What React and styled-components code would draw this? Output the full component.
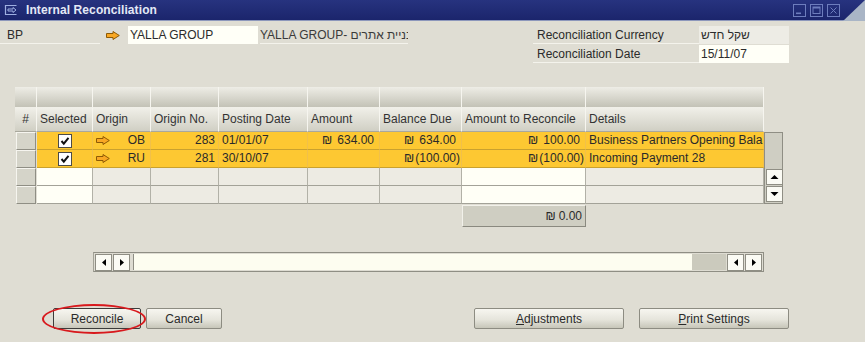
import React from 'react'
import styled, { createGlobalStyle } from 'styled-components'

const GlobalStyle = createGlobalStyle`
  html, body { margin:0; padding:0; }
  body {
    background:#dfddd3;
    font-family:"Liberation Sans", Arial, sans-serif;
    font-size:12px;
    color:#2b2b2b;
  }
`

const columns = [
  { key: 'num', label: '#', align: 'center' },
  { key: 'sel', label: 'Selected', editable: true },
  { key: 'origin', label: 'Origin' },
  { key: 'originNo', label: 'Origin No.' },
  { key: 'date', label: 'Posting Date' },
  { key: 'amount', label: 'Amount' },
  { key: 'balance', label: 'Balance Due' },
  { key: 'toRec', label: 'Amount to Reconcile', editable: true },
  { key: 'details', label: 'Details' },
]

const rows = [
  { origin: 'OB', no: '283', date: '01/01/07', amount: 634, balance: 634, toRec: 100, details: 'Business Partners Opening Balance' },
  { origin: 'RU', no: '281', date: '30/10/07', amount: null, balance: -100, toRec: -100, details: 'Incoming Payment 28' },
]

const Window = styled.div`
  width:865px;
  height:342px;
  display:flex;
  flex-direction:column;
  background:#dfddd3;
  overflow:hidden;
`

const TitleBar = styled.div`
  position:relative;
  flex:none;
  height:20px;
  display:flex;
  align-items:center;
  gap:8px;
  padding-left:4px;
  background:linear-gradient(#27337f, #1b256c);
  border-bottom:1px solid #8d97bb;
  color:#e4e9f6;
  font-weight:bold;
  font-size:12px;

  &::after{
    content:'';
    position:absolute;
    right:0;
    top:0;
    width:22px;
    height:21px;
    background:#a9b5c6;
    clip-path:polygon(100% 0, 100% 100%, 0 100%);
  }
`

const TitleText = styled.span`
  flex:1;
  letter-spacing:0.1px;
`

const WinButtons = styled.div`
  display:flex;
  gap:4px;
  margin-right:25px;
`

const TopSection = styled.div`
  display:flex;
  justify-content:space-between;
  padding:5px 76px 0 0;
`

const BpRow = styled.div`
  display:flex;
  align-items:center;
  height:18px;
`

const Label = styled.div`
  box-sizing:border-box;
  width:${p => p.$w}px;
  height:18px;
  line-height:18px;
  padding-left:${p => p.$pad ?? 7}px;
  border-bottom:1px solid #f4f3ec;
  white-space:nowrap;
`

const ArrowSlot = styled.div`
  width:28px;
  height:18px;
  display:flex;
  align-items:center;
  padding-left:6px;
  box-sizing:border-box;
`

const Field = styled.div`
  box-sizing:border-box;
  width:${p => p.$w}px;
  height:18px;
  line-height:18px;
  padding-left:2px;
  background:${p => (p.$readonly ? '#edece5' : '#fffff7')};
  white-space:nowrap;
`

const Desc = styled.div`
  box-sizing:border-box;
  width:148px;
  margin-left:2px;
  height:18px;
  line-height:18px;
  overflow:hidden;
  white-space:nowrap;
  border-bottom:1px solid #f4f3ec;
  color:#3a3a3a;
`

const RightBlock = styled.div`
  display:flex;
  flex-direction:column;
  gap:1px;
`

const RightRow = styled.div`
  display:flex;
`

const Grid = styled.div`
  display:grid;
  grid-template-columns:22px 56px 58px 68px 89px 72px 82px 124px 178px 19px;
  margin:24px 0 0 15px;
  width:max-content;
`

const HeadCell = styled.div`
  box-sizing:border-box;
  height:${p => (p.$top ? 21 : 24)}px;
  line-height:${p => (p.$top ? 21 : 23)}px;
  padding:0 3px;
  text-align:${p => p.$align || 'left'};
  background:${p => (p.$top ? 'linear-gradient(#eeede6, #c3c2b6)' : 'linear-gradient(#f0efe8, #d0cfc4)')};
  border-right:1px solid #f6f5ef;
  border-bottom:1px solid ${p => (p.$top ? '#f0efe8' : '#a9a89d')};
  white-space:nowrap;
  overflow:hidden;
  color:#333;
`

const HeadBlank = styled.div``

const RowHead = styled.div`
  box-sizing:border-box;
  height:18px;
  margin:0 1px 0 1px;
  background:#d5d4c9;
  border-top:1px solid #f6f5ef;
  border-left:1px solid #f6f5ef;
  border-right:1px solid #8f8e84;
  border-bottom:1px solid #8f8e84;
`

const Cell = styled.div`
  box-sizing:border-box;
  height:18px;
  line-height:17px;
  padding:0 ${p => p.$padR ?? 3}px 0 3px;
  display:flex;
  align-items:center;
  justify-content:${p => (p.$align === 'right' ? 'flex-end' : p.$align === 'center' ? 'center' : 'space-between')};
  background:${p => (p.$active ? '#fdc832' : p.$editable ? '#fffff6' : '#edebe3')};
  border-right:1px solid ${p => (p.$active ? '#f1c04a' : '#b2b1a7')};
  border-bottom:1px solid ${p => (p.$active ? '#c9a12e' : '#a3a298')};
  white-space:nowrap;
  overflow:hidden;
  color:#2a2a2a;
`

const Ghost = styled.span`
  visibility:${p => (p.$show ? 'visible' : 'hidden')};
`

const Shekel = styled.span`
  margin-right:${p => p.$gap}px;
`

const VScroll = styled.div`
  grid-column:10;
  grid-row:3 / 7;
  box-sizing:border-box;
  display:flex;
  flex-direction:column;
  border:1px solid #8f8e84;
  background:#cfcec3;
  padding:0 1px 1px;
`

const VTrack = styled.div`
  flex:1;
`

const ScrollBtn = styled.div`
  box-sizing:border-box;
  width:${p => p.$w || 17}px;
  height:${p => p.$h || 17}px;
  display:flex;
  align-items:center;
  justify-content:center;
  background:#fbfbf4;
  border:1px solid #8f8e84;
  margin-top:${p => p.$mt || 0}px;
`

const TotalCell = styled.div`
  grid-column:8;
  grid-row:7;
  box-sizing:border-box;
  margin-top:1px;
  height:22px;
  display:flex;
  align-items:center;
  justify-content:flex-end;
  padding-right:3px;
  background:#cfcec2;
  border-right:1px solid #8a897f;
  border-bottom:1px solid #8a897f;
  border-top:1px solid #f2f1ea;
  border-left:1px solid #f2f1ea;
`

const HScroll = styled.div`
  grid-column:3 / 10;
  grid-row:8;
  margin-top:25px;
  box-sizing:border-box;
  height:20px;
  width:671px;
  display:flex;
  align-items:center;
  gap:1px;
  padding:0 1px;
  border:1px solid #8f8e84;
  border-left-color:#a3a297;
  background:#dedcd2;
`

const HTrack = styled.div`
  flex:1;
  height:16px;
  margin-left:2px;
  display:flex;
  background:#fdfdf0;
  border-left:1px solid #8f8e84;
`

const HThumb = styled.div`
  width:34px;
  margin-left:auto;
  background:#cbcabd;
`

const ButtonRow = styled.div`
  display:flex;
  justify-content:space-between;
  margin-top:36px;
  padding:0 76px 0 53px;
`

const ButtonGroup = styled.div`
  display:flex;
  gap:${p => p.$gap}px;
`

const Button = styled.button`
  position:relative;
  box-sizing:border-box;
  width:${p => p.$w}px;
  height:21px;
  padding:0;
  font-family:"Liberation Sans", Arial, sans-serif;
  font-size:12px;
  color:#2a2a2a;
  background:linear-gradient(#f7f6f0, #e6e5dc 55%, #c7c6b9);
  border:1px solid ${p => (p.$default ? '#3c3c3a' : '#8d8c82')};
  border-radius:2px;

  u{ text-decoration:underline; }
`

const Ellipse = styled.span`
  position:absolute;
  left:-12px;
  top:-5px;
  width:104px;
  height:30px;
  border:2px solid #d8191d;
  border-radius:50%;
  box-sizing:border-box;
  pointer-events:none;
`

function Arrow() {
  return (
    <svg width="14" height="9" viewBox="0 0 14 9">
      <path d="M0.5 2.5 H7 V0.5 L13.3 4.5 L7 8.5 V6.5 H0.5 Z" fill="#f9a824" stroke="#8d5a06" strokeWidth="1" />
    </svg>
  )
}

function Check() {
  return (
    <svg width="14" height="14" viewBox="0 0 14 14">
      <rect x="0.5" y="0.5" width="13" height="13" fill="#fff" stroke="#4c4c48" />
      <path d="M3.5 7 L5.8 9.6 L10.5 3.8" fill="none" stroke="#111" strokeWidth="2" />
    </svg>
  )
}

function Tri({ dir }) {
  const d = {
    left: 'M5 1 L1 4.5 L5 8 Z',
    right: 'M1 1 L5 4.5 L1 8 Z',
    up: 'M0.5 5 L4.5 1 L8.5 5 Z',
    down: 'M0.5 1 L4.5 5 L8.5 1 Z',
  }[dir]
  const horiz = dir === 'left' || dir === 'right'
  return (
    <svg width={horiz ? 6 : 9} height={horiz ? 9 : 6} viewBox={horiz ? '0 0 6 9' : '0 0 9 6'}>
      <path d={d} fill="#000" />
    </svg>
  )
}

function TitleIcon() {
  return (
    <svg width="14" height="12" viewBox="0 0 14 12">
      <path d="M12.5 1.5 H1.5 V10.5 H12.5" fill="none" stroke="#9fb0e2" strokeWidth="1.2" />
      <path d="M4 5 H9 V3.5 L12 6 L9 8.5 V7 H4 Z" fill="none" stroke="#9fb0e2" strokeWidth="1" />
    </svg>
  )
}

function WinIcon({ kind }) {
  return (
    <svg width="13" height="13" viewBox="0 0 13 13">
      <rect x="0.5" y="0.5" width="12" height="12" fill="none" stroke="#6d7dbd" />
      {kind === 'min' && <rect x="3" y="8.5" width="5" height="1.6" fill="#6d7dbd" />}
      {kind === 'max' && <rect x="3" y="3" width="7" height="6.5" fill="none" stroke="#6d7dbd" strokeWidth="1" />}
      {kind === 'max' && <rect x="3" y="3" width="7" height="1.5" fill="#6d7dbd" />}
      {kind === 'close' && <path d="M3.5 3.5 L9.5 9.5 M9.5 3.5 L3.5 9.5" stroke="#6d7dbd" strokeWidth="1" />}
    </svg>
  )
}

function Money({ value }) {
  if (value === null || value === undefined) return null
  const neg = value < 0
  const text = Math.abs(value).toFixed(2)
  return (
    <span>
      <Shekel $gap={1}>₪</Shekel>
      <Ghost $show={neg}>(</Ghost>
      {text}
      <Ghost $show={neg}>)</Ghost>
    </span>
  )
}

function DataRow({ row }) {
  const active = !!row
  return (
    <>
      <RowHead />
      <Cell $active={active} $editable $align="center">{active && <Check />}</Cell>
      <Cell $active={active} $padR={5}>
        {active && <Arrow />}
        {active && <span>{row.origin}</span>}
      </Cell>
      <Cell $active={active} $align="right">{active && row.no}</Cell>
      <Cell $active={active}>{active && row.date}</Cell>
      <Cell $active={active} $align="right" $padR={1}>{active && <Money value={row.amount} />}</Cell>
      <Cell $active={active} $align="right" $padR={1}>{active && <Money value={row.balance} />}</Cell>
      <Cell $active={active} $editable $align="right" $padR={1}>{active && <Money value={row.toRec} />}</Cell>
      <Cell $active={active} $padR={0}>{active && row.details}</Cell>
    </>
  )
}

export default function App() {
  return (
    <>
      <GlobalStyle />
      <Window>
        <TitleBar>
          <TitleIcon />
          <TitleText>Internal Reconciliation</TitleText>
          <WinButtons>
            <WinIcon kind="min" />
            <WinIcon kind="max" />
            <WinIcon kind="close" />
          </WinButtons>
        </TitleBar>

        <TopSection>
          <BpRow>
            <Label $w={100}>BP</Label>
            <ArrowSlot><Arrow /></ArrowSlot>
            <Field $w={130}>YALLA GROUP</Field>
            <Desc>YALLA GROUP- בניית אתרים</Desc>
          </BpRow>
          <RightBlock>
            <RightRow>
              <Label $w={166} $pad={4}>Reconciliation Currency</Label>
              <Field $w={90} $readonly>שקל חדש</Field>
            </RightRow>
            <RightRow>
              <Label $w={166} $pad={4}>Reconciliation Date</Label>
              <Field $w={90}>15/11/07</Field>
            </RightRow>
          </RightBlock>
        </TopSection>

        <Grid>
          {columns.map(c => <HeadCell key={'t' + c.key} $top />)}
          <HeadBlank />
          {columns.map(c => (
            <HeadCell key={c.key} $align={c.align}>{c.label}</HeadCell>
          ))}
          <HeadBlank />

          <VScroll>
            <VTrack />
            <ScrollBtn $h={16}><Tri dir="up" /></ScrollBtn>
            <ScrollBtn $h={16} $mt={1}><Tri dir="down" /></ScrollBtn>
          </VScroll>

          <DataRow row={rows[0]} />
          <DataRow row={rows[1]} />
          <DataRow />
          <DataRow />

          <TotalCell>
            <Shekel $gap={3}>₪</Shekel>0.00
          </TotalCell>

          <HScroll>
            <ScrollBtn><Tri dir="left" /></ScrollBtn>
            <ScrollBtn><Tri dir="right" /></ScrollBtn>
            <HTrack><HThumb /></HTrack>
            <ScrollBtn><Tri dir="left" /></ScrollBtn>
            <ScrollBtn><Tri dir="right" /></ScrollBtn>
          </HScroll>
        </Grid>

        <ButtonRow>
          <ButtonGroup $gap={5}>
            <Button $w={88} $default>
              Reconcile
              <Ellipse />
            </Button>
            <Button $w={76}>Cancel</Button>
          </ButtonGroup>
          <ButtonGroup $gap={15}>
            <Button $w={150}><u>A</u>djustments</Button>
            <Button $w={150}><u>P</u>rint Settings</Button>
          </ButtonGroup>
        </ButtonRow>
      </Window>
    </>
  )
}
